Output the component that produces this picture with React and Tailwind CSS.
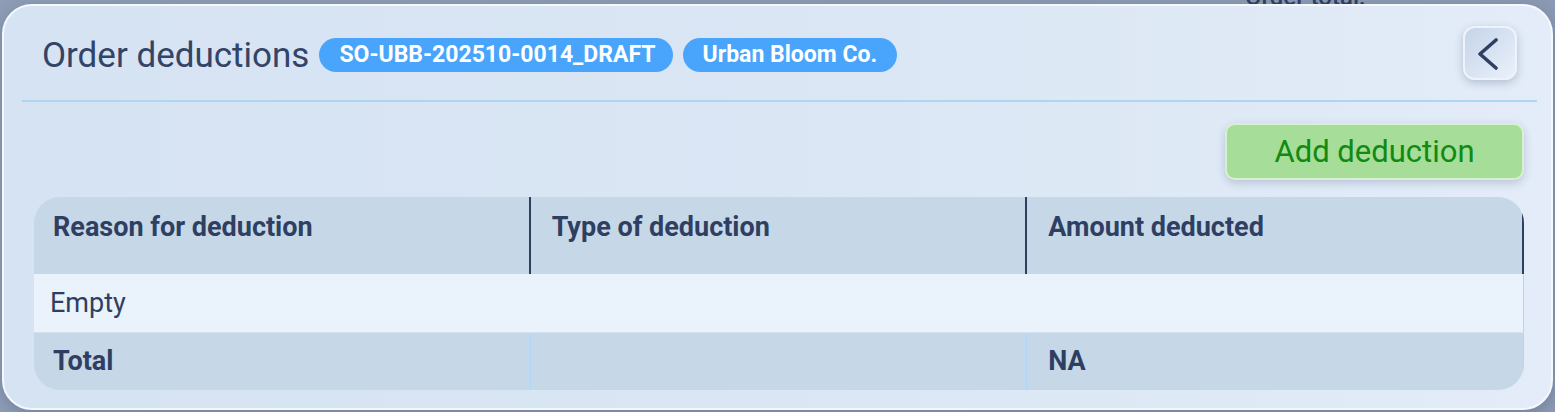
const COLUMNS = ['Reason for deduction', 'Type of deduction', 'Amount deducted']

function BackIcon() {
  return (
    <svg width="22" height="34" viewBox="0 0 22 34" fill="none">
      <polyline points="18,4 2,18 18,32" stroke="#2f4064" strokeWidth="3.6" strokeLinecap="round" strokeLinejoin="round" />
    </svg>
  )
}

export default function App() {
  return (
    <div className="relative h-[412px] w-[1555px] overflow-hidden bg-gradient-to-r from-[#8e9cb4] to-[#8b9ab2] font-['Roboto',sans-serif]">
      {/* page behind the modal */}
      <div className="absolute left-[1245px] top-[-15px] text-[24px] font-medium leading-[24px] text-[#2e3f62]">Order total:</div>

      <div className="absolute left-[2px] top-[4px] h-[406px] w-[1551px] rounded-[30px] border-2 border-[#f4f8fd] bg-gradient-to-r from-[#d6e3f3] via-[#dae6f4] to-[#e3ecf8] shadow-[0_4px_14px_rgba(40,60,100,0.25)]">
        <div className="ml-[18px] mr-[14px] flex h-[96px] items-center justify-between border-b-2 border-[#acd6f1] pl-[20px] pr-[20px]">
          <div className="flex items-center gap-[10px] pt-[4px]">
            <h1 className="text-[35px] font-normal leading-none text-[#334466]">Order deductions</h1>
            <span className="rounded-full bg-[#48a5fb] pl-[20px] pr-[17px] py-[5px] text-[23px] font-bold leading-[24px] text-white">
              SO-UBB-202510-0014_DRAFT
            </span>
            <span className="rounded-full bg-[#48a5fb] px-[20px] py-[5px] text-[23px] font-bold leading-[24px] text-white">
              Urban Bloom Co.
            </span>
          </div>
          <button className="flex h-[54px] w-[54px] items-center justify-center rounded-[12px] border-2 border-[#eef3fb] bg-gradient-to-br from-[#c5d4e9] to-[#eaf1fa] pr-[3px] shadow-[0_3px_8px_rgba(40,60,100,0.25)]">
            <BackIcon />
          </button>
        </div>

        <div className="pl-[30px] pr-[27px]">
          <div className="flex justify-end pt-[21px]">
            <button className="h-[57px] w-[299px] rounded-[10px] border-2 border-[#d8f0d2] bg-[#a6dd98] text-[31px] leading-none text-[#118a11] shadow-[0_3px_8px_rgba(40,60,100,0.22)]">
              Add deduction
            </button>
          </div>

          <div className="mt-[17px] overflow-hidden rounded-[26px] text-[27px] text-[#2e3f62]">
            <div className="grid h-[77px] grid-cols-3 bg-[#c6d8e8] font-bold">
              {COLUMNS.map((c, i) => (
                <div key={c} className={`border-r-2 border-[#2e3f62] pt-[14px] leading-[32px] ${i === 0 ? 'pl-[19px]' : 'pl-[21px]'}`}>
                  {c}
                </div>
              ))}
            </div>
            <div className="flex h-[58px] items-center border-r border-[#a9d9f6] bg-[#eaf2fc] pl-[16px]">Empty</div>
            <div className="grid h-[58px] grid-cols-3 border-t border-[#d4e2f0] bg-[#c6d8e8] font-bold">
              <div className="flex items-center border-r border-[#a9d9f6] pl-[19px]">Total</div>
              <div className="border-r border-[#a9d9f6]" />
              <div className="flex items-center border-r border-[#a9d9f6] pl-[21px]">NA</div>
            </div>
          </div>
        </div>
      </div>
    </div>
  )
}
